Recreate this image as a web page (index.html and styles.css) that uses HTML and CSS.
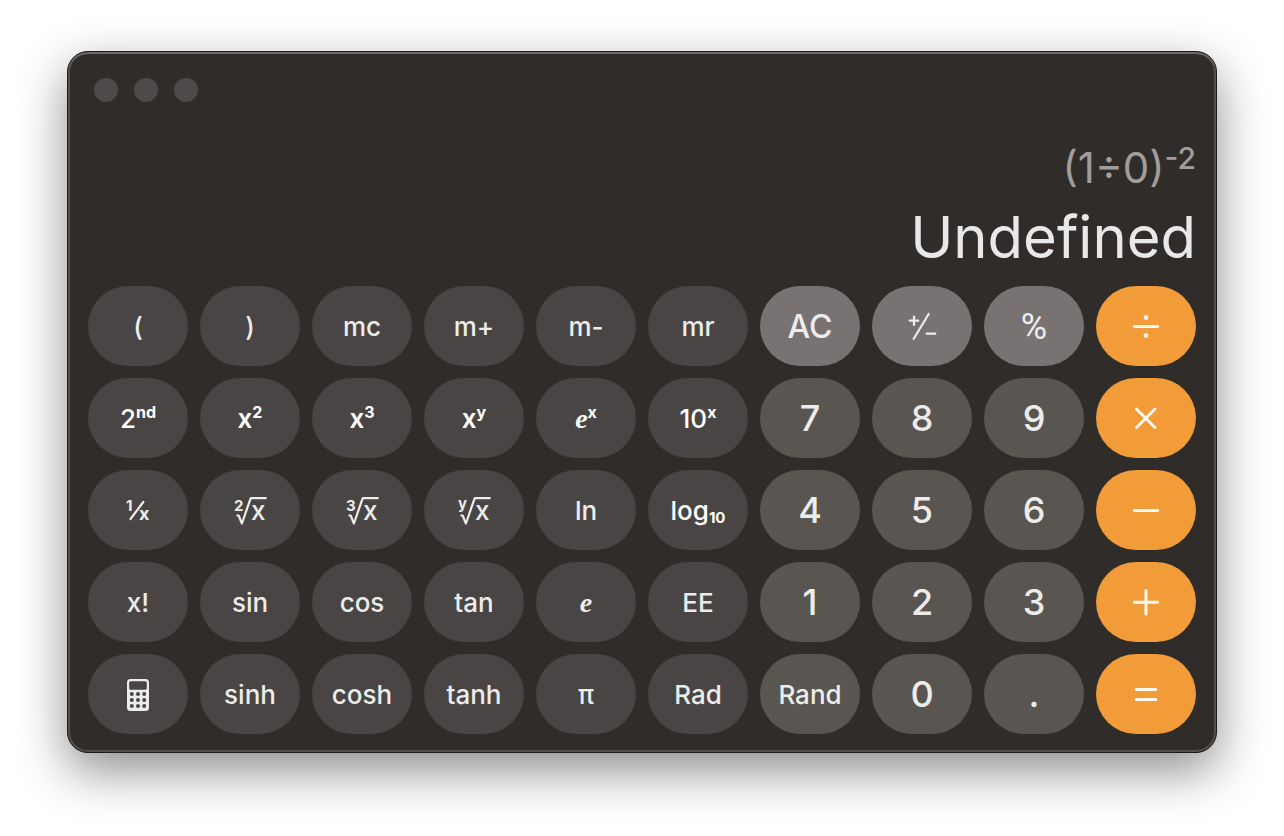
FILE: index.html
```html
<!DOCTYPE html>
<html lang="en">
<head>
    <meta charset="UTF-8">
    <meta name="viewport" content="width=device-width, initial-scale=1.0">
    <title>Calculator</title>
    <link rel="stylesheet" href="styles.css">
</head>
<body>
    <main class="calculator">
        <div class="titlebar">
            <button class="dot" type="button" aria-label="Close"></button>
            <button class="dot" type="button" aria-label="Minimize"></button>
            <button class="dot" type="button" aria-label="Zoom"></button>
        </div>

        <div class="display">
            <div class="expression">(1÷0)<sup>-2</sup></div>
            <div class="result">Undefined</div>
        </div>

        <div class="keys">
            <button class="key" type="button">(</button>
            <button class="key" type="button">)</button>
            <button class="key" type="button">mc</button>
            <button class="key" type="button">m+</button>
            <button class="key" type="button">m-</button>
            <button class="key" type="button">mr</button>
            <button class="key top clear" type="button">AC</button>
            <button class="key top drawn" type="button" aria-label="Plus or minus">
                <svg class="icon" width="40" height="40" viewBox="0 0 40 40"><path d="M12 10.500v8.500M7.700 14.700h8.600M26.700 8L11.700 32.800M24.700 27.700h8.600"/></svg>
            </button>
            <button class="key top percent" type="button">%</button>
            <button class="key op drawn" type="button" aria-label="Divide">
                <svg class="icon" width="40" height="40" viewBox="0 0 40 40"><path d="M8.300 20.500h23.400"/><circle class="fill" cx="20" cy="11.500" r="2.400"/><circle class="fill" cx="20" cy="29.600" r="2.400"/></svg>
            </button>

            <button class="key bright" type="button">2<sup>nd</sup></button>
            <button class="key bright" type="button"><b>x</b><sup>2</sup></button>
            <button class="key bright" type="button"><b>x</b><sup>3</sup></button>
            <button class="key bright" type="button"><b>x</b><sup>y</sup></button>
            <button class="key bright" type="button"><i>e</i><sup>x</sup></button>
            <button class="key bright" type="button">10<sup>x</sup></button>
            <button class="key number" type="button">7</button>
            <button class="key number" type="button">8</button>
            <button class="key number" type="button">9</button>
            <button class="key op drawn" type="button" aria-label="Multiply">
                <svg class="icon" width="40" height="40" viewBox="0 0 40 40"><path d="M10.500 11l18.500 18.500M29 11L10.500 29.500"/></svg>
            </button>

            <button class="key drawn" type="button" aria-label="Reciprocal">
                <svg class="icon" width="40" height="40" viewBox="0 0 40 40"><path d="M25.300 12L12.500 29"/><text class="small" x="8" y="21">1</text><text class="denominator" x="21" y="30">x</text></svg>
            </button>
            <button class="key drawn" type="button" aria-label="Square root">
                <svg class="icon" width="40" height="40" viewBox="0 0 40 40"><path d="M7.300 25.500h1.400l3.200 8L20.700 8.200h15"/><text class="small" x="4" y="21">2</text><text x="21" y="30">x</text></svg>
            </button>
            <button class="key drawn" type="button" aria-label="Cube root">
                <svg class="icon" width="40" height="40" viewBox="0 0 40 40"><path d="M7.300 25.500h1.400l3.200 8L20.700 8.200h15"/><text class="small" x="4" y="21">3</text><text x="21" y="30">x</text></svg>
            </button>
            <button class="key drawn" type="button" aria-label="Root y of x">
                <svg class="icon" width="40" height="40" viewBox="0 0 40 40"><path d="M7.300 25.500h1.400l3.200 8L20.700 8.200h15"/><text class="small" x="4" y="19">y</text><text x="21" y="30">x</text></svg>
            </button>
            <button class="key" type="button">ln</button>
            <button class="key bright" type="button">log<sub>10</sub></button>
            <button class="key number" type="button">4</button>
            <button class="key number" type="button">5</button>
            <button class="key number" type="button">6</button>
            <button class="key op drawn" type="button" aria-label="Subtract">
                <svg class="icon" width="40" height="40" viewBox="0 0 40 40"><path d="M8.300 20.500h23.400"/></svg>
            </button>

            <button class="key" type="button">x!</button>
            <button class="key" type="button">sin</button>
            <button class="key" type="button">cos</button>
            <button class="key" type="button">tan</button>
            <button class="key" type="button"><i>e</i></button>
            <button class="key" type="button">EE</button>
            <button class="key number" type="button">1</button>
            <button class="key number" type="button">2</button>
            <button class="key number" type="button">3</button>
            <button class="key op drawn" type="button" aria-label="Add">
                <svg class="icon" width="40" height="40" viewBox="0 0 40 40"><path d="M8.300 20.200h23.400M20 8.500v23.400"/></svg>
            </button>

            <button class="key drawn" type="button" aria-label="Calculator mode">
                <svg class="icon" width="40" height="40" viewBox="0 0 40 40">
                    <path class="fill" fill-rule="evenodd" d="M12.500 5h15a3.500 3.500 0 0 1 3.500 3.500v25a3.500 3.500 0 0 1-3.500 3.500h-15a3.500 3.500 0 0 1-3.500-3.500v-25A3.500 3.500 0 0 1 12.500 5zM12.700 7.200a1.500 1.500 0 0 0-1.500 1.500v5.500a1.500 1.500 0 0 0 1.500 1.500h14.600a1.500 1.500 0 0 0 1.500-1.500v-5.500a1.500 1.500 0 0 0-1.500-1.500z"/>
                    <g class="holes">
                        <circle cx="13.800" cy="20" r="2"/><circle cx="20" cy="20" r="2"/><circle cx="26.200" cy="20" r="2"/>
                        <circle cx="13.800" cy="26" r="2"/><circle cx="20" cy="26" r="2"/><circle cx="26.200" cy="26" r="2"/>
                        <circle cx="13.800" cy="32" r="2"/><circle cx="20" cy="32" r="2"/><circle cx="26.200" cy="32" r="2"/>
                    </g>
                </svg>
            </button>
            <button class="key" type="button">sinh</button>
            <button class="key" type="button">cosh</button>
            <button class="key" type="button">tanh</button>
            <button class="key" type="button">π</button>
            <button class="key" type="button">Rad</button>
            <button class="key number rand" type="button">Rand</button>
            <button class="key number" type="button">0</button>
            <button class="key number" type="button">.</button>
            <button class="key op drawn" type="button" aria-label="Equals">
                <svg class="icon" width="40" height="40" viewBox="0 0 40 40"><path d="M10.200 15.500h19.600M10.200 25.500h19.600"/></svg>
            </button>
        </div>
    </main>
</body>
</html>
```
FILE: styles.css
```css
body {
    margin: 0;
    padding: 51px 67px 83px;
    background: #fff;
    font-family: Inter, "Liberation Sans", sans-serif;
}
.calculator {
    padding: 26px 20px 18px;
    border: 1px solid #1c1b1a;
    border-radius: 21px;
    background: #302c2a;
    box-shadow: inset 0 2px 0 #6c6a68, inset 0 0 0 2px #54504d, 0 18px 50px rgba(0, 0, 0, 0.45);
}
.titlebar {
    display: flex;
    gap: 16px;
    padding-left: 6px;
}
.dot {
    width: 24px;
    height: 24px;
    padding: 0;
    border: none;
    border-radius: 50%;
    background: #4e4a49;
}
.display {
    margin: 36px 0 13px;
    text-align: right;
}
.expression {
    color: #a09d9c;
    font-size: 42px;
    line-height: 60px;
}
.expression sup {
    font-size: 30px;
    font-weight: 500;
    line-height: 0;
    vertical-align: 14px;
}
.result {
    margin-top: 3px;
    color: #e9e8e8;
    font-size: 58px;
    line-height: 72px;
}
.keys {
    display: grid;
    grid-template-columns: repeat(10, 1fr);
    grid-auto-rows: 80px;
    gap: 12px;
}
.key {
    min-width: 0;
    padding: 2px 0 0;
    border: none;
    border-radius: 40px;
    background: #494544;
    color: #ececeb;
    font-family: inherit;
    font-size: 26px;
    font-weight: 500;
    line-height: 32px;
}
.key sup,
.key sub {
    font-size: 16px;
    font-weight: 700;
    line-height: 0;
}
.key sup {
    vertical-align: 10px;
}
.key sub {
    font-size: 15px;
    vertical-align: -3px;
}
.key b {
    font-weight: 600;
}
.key i {
    font-family: "Liberation Serif", serif;
    font-size: 28px;
    font-weight: 700;
    line-height: 0;
}
.bright {
    color: #fff;
}
.top {
    background: #787372;
}
.clear {
    font-size: 32px;
}
.percent {
    font-family: Roboto, sans-serif;
    font-size: 36px;
    font-weight: 400;
}
.number {
    padding: 0;
    background: #595551;
    font-size: 36px;
}
.rand {
    padding: 2px 0 0;
    font-size: 26px;
}
.op {
    background: #f19c38;
    color: #fff8ef;
}
.drawn {
    padding: 0;
}
.icon {
    display: block;
    margin: 0 auto;
    fill: none;
    stroke: currentColor;
    stroke-width: 2.2;
    stroke-linecap: round;
    stroke-linejoin: round;
}
.op .icon {
    stroke-width: 3;
}
.icon .fill,
.icon text {
    fill: currentColor;
    stroke: none;
}
.icon .small {
    font-size: 15px;
    font-weight: 700;
}
.icon .denominator {
    font-size: 18px;
    font-weight: 700;
}
.icon .holes {
    fill: #494544;
    stroke: none;
}
```
